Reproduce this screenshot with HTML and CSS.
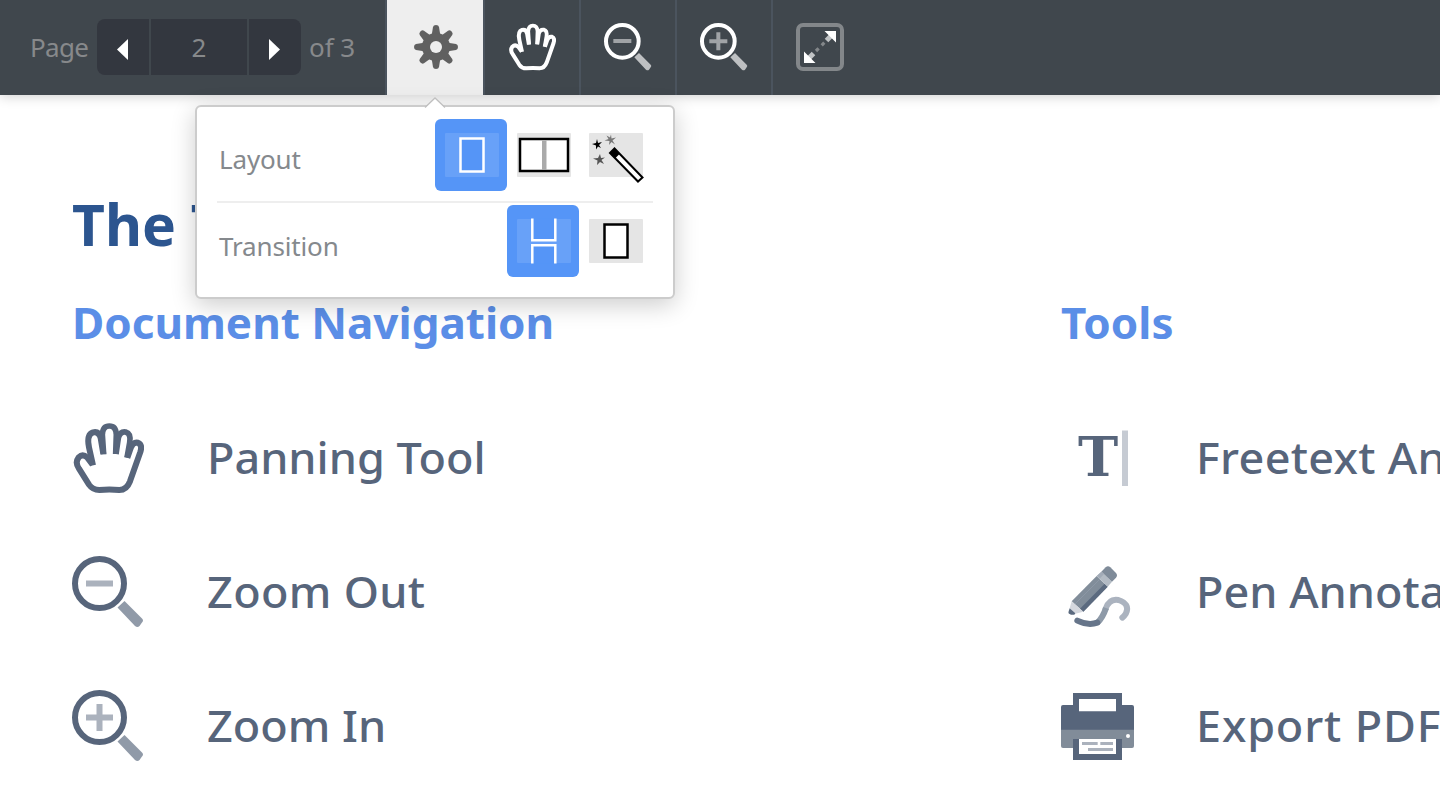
FILE: index.html
```html
<!DOCTYPE html>
<html lang="en">
<head>
<meta charset="utf-8">
<title>Document viewer</title>
<link rel="stylesheet" href="styles.css">
</head>
<body>
<svg class="defs" width="0" height="0">
  <symbol id="hand" viewBox="36 36 216 216">
    <path fill="none" stroke="currentColor" stroke-width="18" stroke-linejoin="round" d="M99 166 L87 112 Q79 74 99 67 Q117 63 122 84 L130 132"/>
    <path fill="none" stroke="currentColor" stroke-width="17" d="M131 133 L127 74 Q128 48 148 48 Q168 48 169 74 L167 132"/>
    <path fill="none" stroke="currentColor" stroke-width="17" d="M168 132 L175 84 Q180 64 197 66 Q214 71 209 98 L201 143"/>
    <path fill="none" stroke="currentColor" stroke-width="18" stroke-linejoin="round" d="M202 143 L213 112 Q220 95 234 98 Q248 104 241 126 L210 214 Q200 240 178 240 Q148 237 118 240 Q98 240 87 224 L57 176 Q44 158 56 142 Q68 130 82 143 L98 164"/>
  </symbol>
  <symbol id="lens" viewBox="0 0 72 72">
    <circle cx="27.5" cy="27.5" r="24.5" fill="none" stroke="currentColor" stroke-width="6"/>
    <path class="handle" d="M45.5 51.5 52.5 45 70 62.5Q72 64.500 70 66.500L67.500 70Q65.500 72 63 70Z"/>
  </symbol>
</svg>

<header class="toolbar">
  <div class="pager">
    <span class="pager-label">Page</span>
    <div class="pager-controls">
      <button class="pager-step"><svg width="11" height="21" viewBox="0 0 11 21"><path d="M11 0V21L0 10.500Z"/></svg></button>
      <span class="pager-current">2</span>
      <button class="pager-step"><svg width="11" height="21" viewBox="0 0 11 21"><path d="M0 0V21L11 10.500Z"/></svg></button>
    </div>
    <span class="pager-total">of 3</span>
  </div>
  <button class="tool tool-active">
    <svg width="48" height="48" viewBox="-24 -24 48 48">
      <g fill="#606060">
        <path id="teeth" d="M-4.300 -12 L-3 -20 Q-2.600 -22 0 -22 Q2.600 -22 3 -20 L4.300 -12 V12 L3 20 Q2.600 22 0 22 Q-2.600 22 -3 20 L-4.300 12Z"/>
        <use href="#teeth" transform="rotate(45)"/><use href="#teeth" transform="rotate(90)"/><use href="#teeth" transform="rotate(135)"/>
        <circle r="14"/>
      </g>
      <circle r="6" fill="#eee"/>
    </svg>
  </button>
  <button class="tool"><svg width="48" height="48"><use href="#hand"/></svg></button>
  <button class="tool"><svg width="48" height="48" viewBox="0 0 72 72"><use href="#lens"/><path class="sign" d="M14 24h27v6H14z"/></svg></button>
  <button class="tool"><svg width="48" height="48" viewBox="0 0 72 72"><use href="#lens"/><path class="sign" d="M14 24.500H24.500V14h6v10.500H41v6H30.500V41h-6V30.500H14z"/></svg></button>
  <button class="tool">
    <svg width="48" height="48" viewBox="0 0 48 48">
      <rect x="2" y="2" width="44" height="44" rx="5" fill="none" stroke="#83878a" stroke-width="4"/>
      <path d="M12 36 17.500 30.500M30.500 17.500 36 12" stroke="#c0c3c5" stroke-width="5"/>
      <path d="M20 28 22.600 25.400M25.700 22.300 28.300 19.700" stroke="#83878a" stroke-width="3.200"/>
      <path d="M28.500 8H40V19.500ZM8 28.500V40H19.500Z" fill="#fff"/>
    </svg>
  </button>
</header>

<div class="popover">
  <svg class="popover-arrow" width="22" height="12" viewBox="0 0 22 12"><path d="M1 11 11 1 21 11V12H1Z" fill="#fff"/><path d="M1 10.500 11 1 21 10.500" fill="none" stroke="#c0c0c0" stroke-width="1.300"/></svg>
  <div class="option-row">
    <span class="option-label">Layout</span>
    <button class="option option-on"><svg width="72" height="72"><rect class="plate" x="10" y="14" width="54" height="44" rx="1"/><rect x="25.500" y="19.500" width="23" height="33" fill="#5595f7" stroke="#fff" stroke-width="2.500"/></svg></button>
    <button class="option"><svg width="72" height="72"><rect class="plate" x="10" y="14" width="54" height="44" rx="1"/><rect x="13" y="20" width="48" height="32" fill="#fff" stroke="#000" stroke-width="2.500"/><path d="M35 21.500h4.500v29.500h-4.500z" fill="#aaa"/></svg></button>
    <button class="option">
      <svg width="72" height="72">
        <rect class="plate" x="10" y="14" width="54" height="44" rx="1"/>
        <path d="m18 20 1 4 4-1-3 3 2 3-3-1.500-2 3v-4l-4-1.500 4-1z"/>
        <path d="m32 15.500.5 4 4.500-1-3.500 3 2.500 4-3.500-2.500-2.500 3 .5-4-5-.500 4-1.500-2-3.500 3.500 2z" fill="#777"/>
        <path d="m21 35 1 4 4-.5-3.500 2.500 2.500 4-4-2-3 3 .5-4.500-4.500-2 5-.5z" fill="#555"/>
        <path d="m31 34 4.500-4.500 28 29-4.500 4z" fill="#fff" stroke="#000" stroke-width="2"/>
        <path d="m31 34 4.500-4.500 5 5.500-4.500 4.500z"/>
      </svg>
    </button>
  </div>
  <div class="option-row">
    <span class="option-label">Transition</span>
    <button class="option option-on"><svg width="72" height="72"><rect class="plate" x="10" y="14" width="54" height="44" rx="1"/><path d="M25.300 13.500V35.200H48.300V13.500ZM25.300 58.500V40.200H48.300V58.500Z" fill="#5595f7"/><path d="M25.300 13.500V35.200H48.300V13.500M25.300 58.500V40.200H48.300V58.500" fill="none" stroke="#fff" stroke-width="2.500"/></svg></button>
    <button class="option"><svg width="72" height="72"><rect class="plate" x="10" y="14" width="54" height="44" rx="1"/><rect x="25.500" y="19.500" width="23" height="33" fill="#fff" stroke="#000" stroke-width="2.500"/></svg></button>
  </div>
</div>

<main class="page">
  <h1 class="title">The T</h1>
  <div class="columns">
    <section class="column">
      <h2 class="section-title">Document Navigation</h2>
      <ul class="features">
        <li><svg class="icon"><use href="#hand"/></svg><span>Panning Tool</span></li>
        <li class="semi"><svg class="icon" viewBox="0 0 72 72"><use href="#lens"/><path class="sign" d="M14 24.500h27v6H14z"/></svg><span>Zoom Out</span></li>
        <li><svg class="icon" viewBox="0 0 72 72"><use href="#lens"/><path class="sign" d="M14 24.500H24.500V14h6v10.500H41v6H30.500V41h-6V30.500H14z"/></svg><span>Zoom In</span></li>
      </ul>
    </section>
    <section class="column">
      <h2 class="section-title">Tools</h2>
      <ul class="features">
        <li class="semi">
          <svg class="icon" viewBox="0 0 72 72"><text class="serif-t" x="17" y="54">T</text><path d="M61 8.500h6v55.500h-6z" fill="#c6cbd3"/></svg>
          <span>Freetext Annotations</span>
        </li>
        <li>
          <svg class="icon" viewBox="33 18 216 216">
            <path d="M65 154 140 78 173 110 100 185Z" fill="#818d9a"/>
            <path d="M90 176 164 101 173 110 100 185Z" fill="#5b6a7f"/>
            <path d="M74 163 149 88" stroke="#929daa" stroke-width="2"/>
            <path d="M140 78 154 65 186 95 173 110Z" fill="#b3bbc4"/>
            <path d="M154 65 167 52Q174 46 181 52L198 69Q204 76 198 83L186 95Z" fill="#7f8b99"/>
            <path d="M141 77 154 65 162 72 149 86Z" fill="#a2abb7"/>
            <path d="M65 154 100 185 76 191 59 175Z" fill="#d5d8de"/>
            <path d="M59 175 76 190 73 194H63Q53 192 56 184Z" fill="#5b6a7f"/>
            <path d="M167 176Q178 145 205 150Q241 162 228 190Q223 198 217 203" fill="none" stroke="#abb3bf" stroke-width="18" stroke-linecap="round"/>
            <path d="M142 218Q158 204 168 174" fill="none" stroke="#8e9aa8" stroke-width="18"/>
            <path d="M82 212Q115 228 142 218" fill="none" stroke="#66758a" stroke-width="18" stroke-linecap="round"/>
          </svg>
          <span>Pen Annotations</span>
        </li>
        <li class="wide">
          <svg class="icon" viewBox="33 30 216 216">
            <path d="M69 39H216V75H246Q252 75 252 81V150H33V81Q33 75 39 75H69Z" fill="#57657b"/>
            <path d="M87 57H198V94H87Z" fill="#fff"/>
            <path d="M33 149H252V198Q252 204 246 204H39Q33 204 33 198Z" fill="#818c99"/>
            <circle cx="234" cy="168" r="6" fill="#fff"/>
            <path d="M69 177H216V240H69Z" fill="#57657b"/>
            <path d="M87 177H198V222H87Z" fill="#fff"/>
            <path d="M96 186H143V195H96ZM151 186H189V195H151ZM114 204H189V213H114Z" fill="#abb2bd"/>
          </svg>
          <span>Export PDF</span>
        </li>
      </ul>
    </section>
  </div>
</main>
</body>
</html>
```
FILE: styles.css
```css
* { box-sizing: border-box; }
body {
  margin: 0;
  height: 800px;
  overflow: hidden;
  background: #fff;
  font-family: "Noto Sans", sans-serif;
}
button { border: 0; padding: 0; background: none; font: inherit; }
svg { display: block; overflow: visible; }
.defs { position: absolute; }

.toolbar {
  position: relative;
  display: flex;
  height: 95px;
  background: #40474d;
  color: #87898b;
  font-size: 26px;
  box-shadow: 0 1px 12px rgba(0, 0, 0, .2);
}
.pager { display: flex; align-items: center; width: 387px; padding: 0 0 1px 30px; border-right: 2px solid #4b545e; }
.pager-label { width: 67px; letter-spacing: -.7px; }
.pager-controls { display: flex; gap: 2px; width: 204px; height: 56px; overflow: hidden; border-radius: 8px; }
.pager-step { display: grid; place-items: center; width: 52px; padding-top: 5px; background: #33373f; fill: #fff; }
.pager-step:first-child { padding-right: 2px; }
.pager-step:last-child { padding-right: 2px; }
.pager-current { flex: 1; background: #33373f; line-height: 56px; text-align: center; }
.pager-total { padding-left: 8px; letter-spacing: -.1px; }
.tool { width: 96px; padding-bottom: 1px; border-left: 2px solid #4b545e; color: #fff; display: grid; place-items: center; }
.tool-active { padding-left: 2px; background: #eee; border-left: 0; }
.handle { fill: currentColor; opacity: .66; }
.sign { fill: currentColor; opacity: .5; }

.popover {
  position: absolute;
  left: 195px;
  top: 105px;
  z-index: 2;
  width: 480px;
  height: 194px;
  padding: 12px 20px 0;
  border: 2px solid #ccc;
  border-radius: 6px;
  background: #fff;
  box-shadow: 0 6px 24px rgba(0, 0, 0, .2);
}
.popover-arrow { position: absolute; left: 227px; top: -10px; }
.option-row { display: flex; align-items: flex-start; height: 82px; padding: 0 2px; }
.option-row + .option-row { border-top: 2px solid #eee; padding-top: 2px; }
.option-label { flex: 1; padding-top: 22px; font-size: 26px; line-height: 36px; letter-spacing: -.15px; color: #85898d; }
.option-row + .option-row .option-label { padding-top: 23px; }
.option { width: 72px; height: 72px; border-radius: 6px; }
.option-on { background: #5595f7; }
.plate { fill: #e5e5e5; }
.option-on .plate { fill: #68a1f8; }

.page { padding: 96px 0 0 72px; color: #57657b; }
.title { margin: 0; height: 102px; font-size: 57px; line-height: 66px; font-weight: 700; color: #2c558f; }
.columns { display: grid; grid-template-columns: 989px 379px; }
.column { overflow: hidden; }
.section-title { width: max-content; margin: 0 0 69px; font-size: 43px; line-height: 60px; font-weight: 700; color: #5b8ee7; white-space: nowrap; transform: scaleX(1.023); transform-origin: 0 0; }
.features { display: grid; grid-template-columns: 100%; gap: 62px; margin: 0; padding: 0; list-style: none; }
.features li { display: flex; gap: 63px; height: 72px; font-size: 43px; line-height: 72px; font-weight: 500; white-space: nowrap; }
.features li span { transform: scaleX(1.046); transform-origin: 0 0; }
.features .semi { letter-spacing: .3px; }
.features .wide { letter-spacing: .8px; }
.icon { width: 72px; height: 72px; flex: none; }
.serif-t { font: bold 54px "DejaVu Serif", serif; letter-spacing: 0; fill: #57657b; }
```
